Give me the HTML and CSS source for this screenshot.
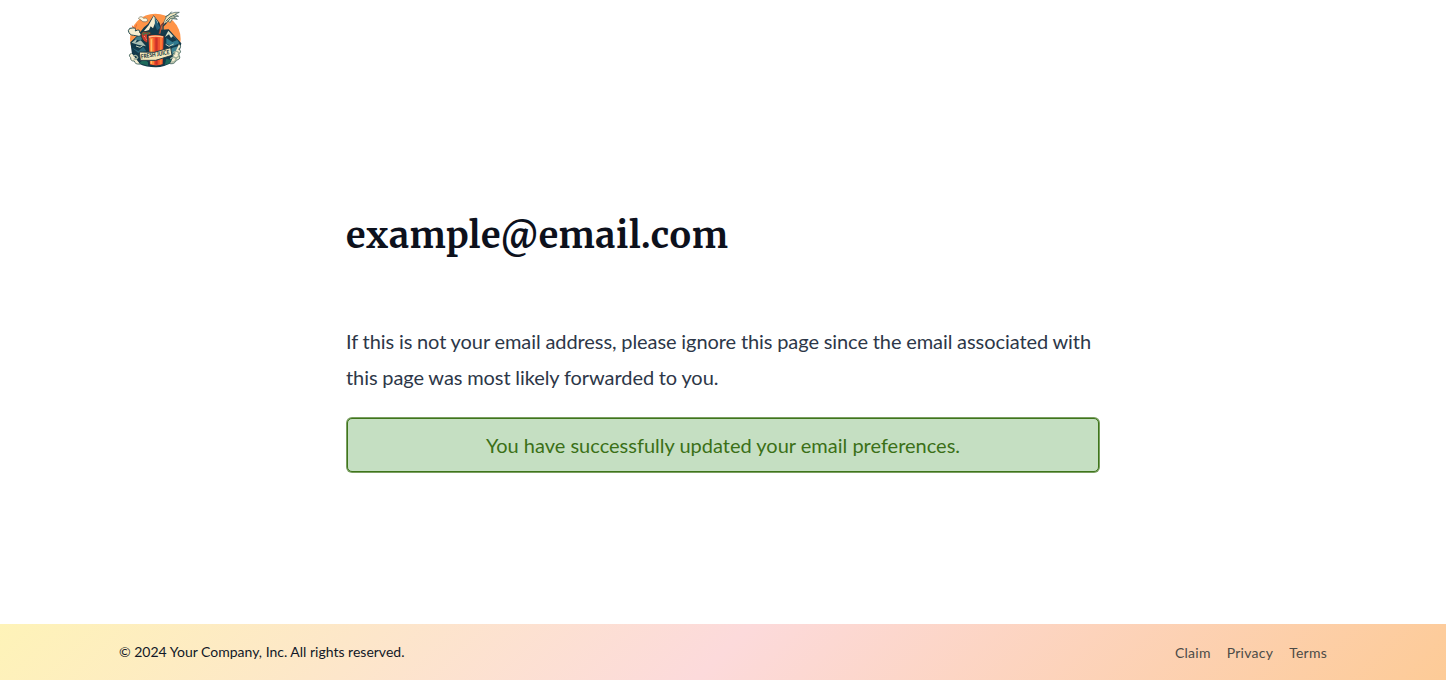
FILE: index.html
```html
<!DOCTYPE html>
<html lang="en">
<head>
<meta charset="utf-8">
<title>Email preferences</title>
<link rel="stylesheet" href="styles.css">
</head>
<body>
<header class="header">
<svg class="logo" viewBox="0 0 210 210" role="img" aria-label="Fresh Juice">
  <circle cx="106" cy="102" r="76" fill="#ff9447"/>
  <path d="M37 62L43 78L50 58M59 42L68 50L81 48" fill="none" stroke="#e86a37" stroke-width="3"/>
  <path d="M31 112L53 91L72 67L84 57L101 31L119 54L125 74L146 73L184 115L177 150L158 172Q130 188 106 187Q80 187 58 177L37 153Z" fill="#12394a"/>
  <path d="M101 33L86 61L70 80L87 75L92 64L99 70L105 55L112 68L114 52Z" fill="#f5edcf"/>
  <path d="M104 37L121 69L111 76L105 59Z" fill="#23617a"/>
  <path d="M145 77L135 96L147 88L153 99L160 92L173 107Z" fill="#d8dfc6"/>
  <path d="M139 99L157 111L172 105L178 115L158 124L139 116Z" fill="#30798d"/>
  <path d="M35 113L55 96L46 114L62 106L78 124L54 119Z" fill="#a9bfb4"/>
  <path d="M36 128L55 138L70 125L79 139L55 144Z" fill="#276478"/>
  <path d="M144 139L158 128L176 123L169 139L154 151Z" fill="#3e8290"/>
  <path d="M43 103L57 91L69 99L61 107Z" fill="#3c7c88"/>
  <path d="M137 118l10 6l14-7M48 123l12 4l8-5" fill="none" stroke="#c7d3bd" stroke-width="3"/>
  <path d="M25 77Q27 67 38 69Q49 67 46 78Q61 70 59 83Q70 90 57 94L41 91Q28 91 25 77Z" fill="#f5edcf" stroke="#244b51" stroke-width="3"/>
  <path d="M55 40Q63 30 71 40Q82 37 83 48Q70 54 64 46Z" fill="#fff5da" stroke="#71715d" stroke-width="2"/>
  <path d="M35 145Q23 149 32 158Q31 169 43 168Q45 179 60 177M177 117Q187 126 176 132Q188 142 174 147Q187 161 169 166Q164 178 150 176" fill="#f5edcf" stroke="#54736c" stroke-width="3"/>
  <path d="M160 143q14-10 17 5q-2 13-14 9q-8-8 3-11M151 162q10-11 18 0q-7 13-15 8M40 154q8-7 13 3q-5 9-12 4" fill="none" stroke="#9eb09a" stroke-width="4"/>
  <path d="M128 60L134 46Q137 32 151 26Q165 20 178 22L165 28L176 34L161 35L172 43L158 41L150 53L144 47L136 58Z" fill="#eee4bd" stroke="#37585a" stroke-width="2"/>
  <path d="M137 49L150 36L169 28M142 52L151 40L166 39M155 20L146 30L136 35" fill="none" stroke="#496c69" stroke-width="3"/>
  <path d="M116 94L124 62L132 53" fill="none" stroke="#793a30" stroke-width="5"/>
  <path d="M118 91L126 61" stroke="#ed6842" stroke-width="2"/>
  <path d="M129 94V64L139 53" fill="none" stroke="#183d4a" stroke-width="4"/>
  <path d="M63 86Q69 76 80 81Q90 77 96 90Q92 109 79 113Q64 106 63 86Z" fill="#c9392e" stroke="#243b36" stroke-width="3"/>
  <path d="M66 82L78 84L91 80L84 90L77 86L69 92Z" fill="#557044"/>
  <path d="M73 94l3 3m8-5l3 3m-9 6l3 3" stroke="#ffc98f" stroke-width="3"/>
  <path d="M83 91Q105 84 133 92L130 179Q110 187 88 180Z" fill="#ee512e" stroke="#173744" stroke-width="4"/>
  <path d="M87 96Q106 91 129 96" fill="none" stroke="#ffc58c" stroke-width="4"/>
  <path d="M90 99H100L102 179L91 177Z" fill="#ff8739"/>
  <path d="M106 98H113V179H106Z" fill="#cc3029"/>
  <path d="M120 98H127L125 177L119 179Z" fill="#ff7934"/>
  <path d="M94 103V176" stroke="#ffc468" stroke-width="4"/>
  <path d="M58 175L72 162L84 172L84 182ZM134 180L139 162L154 165L148 175Z" fill="#1d695b"/>
  <path d="M58 141L103 142L152 128L156 151L107 166L61 166Z" fill="#f5e8bb" stroke="#264047" stroke-width="3"/>
  <text class="logo-text" transform="translate(64 161) rotate(-9)" textLength="86" lengthAdjust="spacingAndGlyphs">FRESH JUICE</text>
</svg>
</header>
<main class="content">
  <h1 class="email">example@email.com</h1>
  <p class="notice">If this is not your email address, please ignore this page since the email associated with this page was most likely forwarded to you.</p>
  <div class="success">You have successfully updated your email preferences.</div>
</main>
<footer class="footer">
  <span class="copyright">© 2024 Your Company, Inc. All rights reserved.</span>
  <nav class="links"><a>Claim</a><a>Privacy</a><a>Terms</a></nav>
</footer>
</body>
</html>
```
FILE: styles.css
```css
* { box-sizing: border-box; }
body { margin: 0; height: 680px; display: flex; flex-direction: column; font-family: Lato, sans-serif; background: #fff; }
.header { height: 80px; padding: 5px 120px; }
.logo { display: block; width: 70px; height: 70px; }
.logo-text { font: 900 18px Lato, sans-serif; fill: #203a42; }
.content { width: 754px; margin: 0 auto; padding-top: 131px; flex: 1; }
.email { margin: 0; height: 50px; line-height: 50px; font-family: Merriweather, "DejaVu Serif Condensed", serif; font-size: 36px; letter-spacing: 0.6px; font-weight: 700; color: #0d111c; }
.notice { margin: 62px 0 0; font-size: 20px; line-height: 36px; letter-spacing: -0.06px; word-spacing: -0.3px; color: #2d3748; }
.success { margin: 23px 1px 0; height: 54px; border: 1px solid #3f751b; border-radius: 5px; box-shadow: 0 0 0 1px #7a9f61; background: #c5dfc2; color: #3b7017; font-size: 20px; line-height: 53px; text-align: center; }
.footer { height: 56px; padding: 0 119px 2px; display: flex; align-items: center; justify-content: space-between; background: linear-gradient(135deg, #fef3b8, #fcdadb 50%, #fdcb97); font-size: 14px; color: #111827; }
.links { display: flex; gap: 16px; padding-top: 2px; letter-spacing: 0.25px; color: #4c4b47; }
```
